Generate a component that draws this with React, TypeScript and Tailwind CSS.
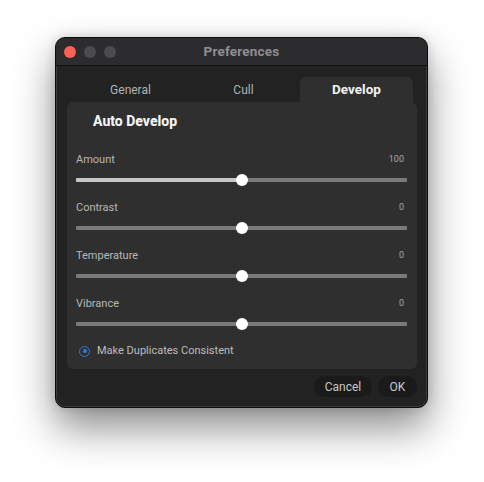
import React from "react";

type SliderRow = { label: string; value: string; pct: number; filled: boolean };

const rows: SliderRow[] = [
  { label: "Amount", value: "100", pct: 50, filled: true },
  { label: "Contrast", value: "0", pct: 50, filled: false },
  { label: "Temperature", value: "0", pct: 50, filled: false },
  { label: "Vibrance", value: "0", pct: 50, filled: false },
];

function Slider({ pct, filled }: { pct: number; filled: boolean }) {
  return (
    <div className="relative h-[12px] flex items-center">
      <div className="h-[4px] w-full bg-[#7b7b7b] rounded-[1px]" />
      {filled && (
        <div
          className="absolute left-0 top-[4px] h-[4px] bg-[#c6c6c6] rounded-[1px]"
          style={{ width: `${pct}%` }}
        />
      )}
      <div
        className="absolute top-0 h-[12px] w-[12px] -ml-[6px] rounded-full bg-white"
        style={{ left: `${pct}%` }}
      />
    </div>
  );
}

export default function App() {
  return (
    <div
      className="w-[484px] h-[482px] bg-white pt-[37px] pl-[55px]"
      style={{ fontFamily: "Roboto, 'Liberation Sans', sans-serif" }}
    >
      <div className="w-[373px] h-[371px] rounded-[10px] bg-[#222222] border border-[#0b0b0b] shadow-[0_20px_40px_rgba(0,0,0,0.45),0_0_12px_rgba(0,0,0,0.15),inset_0_0_0_1px_rgba(255,255,255,0.12)] overflow-hidden flex flex-col">
        {/* title bar */}
        <div className="relative h-[28px] shrink-0 bg-[#2c2c2e] border-b border-[#0e0e0e] flex items-center pl-[8px]">
          <div className="flex gap-[8px]">
            <span className="w-[12px] h-[12px] rounded-full bg-[#fe5f57]" />
            <span className="w-[12px] h-[12px] rounded-full bg-[#4b4b4d]" />
            <span className="w-[12px] h-[12px] rounded-full bg-[#4b4b4d]" />
          </div>
          <div className="absolute inset-0 flex items-center justify-center text-[13.5px] font-bold text-[#8f8f91] tracking-[0.2px]">
            Preferences
          </div>
        </div>

        {/* body */}
        <div className="flex-1 flex flex-col pt-[11px] pl-[11px] pr-[10px]">
          {/* tabs */}
          <div className="flex h-[25px] pl-[7px]">
            <div className="w-[113px] flex items-center justify-center text-[12px] text-[#b3b3b3]">
              General
            </div>
            <div className="w-[113px] flex items-center justify-center text-[12px] text-[#b3b3b3]">
              Cull
            </div>
            <div className="w-[113px] flex items-center justify-center text-[13.5px] font-bold text-[#f2f2f2] bg-[#2f2f2f] rounded-t-[6px]">
              Develop
            </div>
          </div>

          {/* panel */}
          <div className="h-[267px] bg-[#2f2f2f] rounded-[6px] flex flex-col pt-[9px] pl-[9px] pr-[10px] pb-[11px]">
            <div className="h-[20px] pl-[17px] flex items-center text-[14px] font-extrabold text-[#f4f4f4]">
              Auto Develop
            </div>
            <div className="mt-[22px] flex flex-col">
              {rows.map((r) => (
                <div key={r.label} className="h-[48px] flex flex-col">
                  <div className="h-[14px] flex items-center justify-between pr-[3px]">
                    <span className="text-[11px] text-[#b8b8b8]">{r.label}</span>
                    <span className="text-[9px] text-[#a8a8a8]">{r.value}</span>
                  </div>
                  <div className="mt-[7px]">
                    <Slider pct={r.pct} filled={r.filled} />
                  </div>
                </div>
              ))}
            </div>
            <div className="h-[14px] -mt-[1px] flex items-center pl-[3px] gap-[7px]">
              <span className="w-[11px] h-[11px] rounded-full border-[1.5px] border-[#2a7de1] flex items-center justify-center">
                <span className="w-[4px] h-[4px] rounded-full bg-[#2a7de1]" />
              </span>
              <span className="text-[11px] text-[#bdbdbd]">Make Duplicates Consistent</span>
            </div>
          </div>

          {/* buttons */}
          <div className="mt-[7px] flex justify-end gap-[6px]">
            <button className="h-[21px] w-[58px] rounded-full bg-[#1a1a1a] text-[12px] text-[#c8c8c8]">
              Cancel
            </button>
            <button className="h-[21px] w-[39px] rounded-full bg-[#1a1a1a] text-[12px] text-[#c8c8c8]">
              OK
            </button>
          </div>
        </div>
      </div>
    </div>
  );
}
